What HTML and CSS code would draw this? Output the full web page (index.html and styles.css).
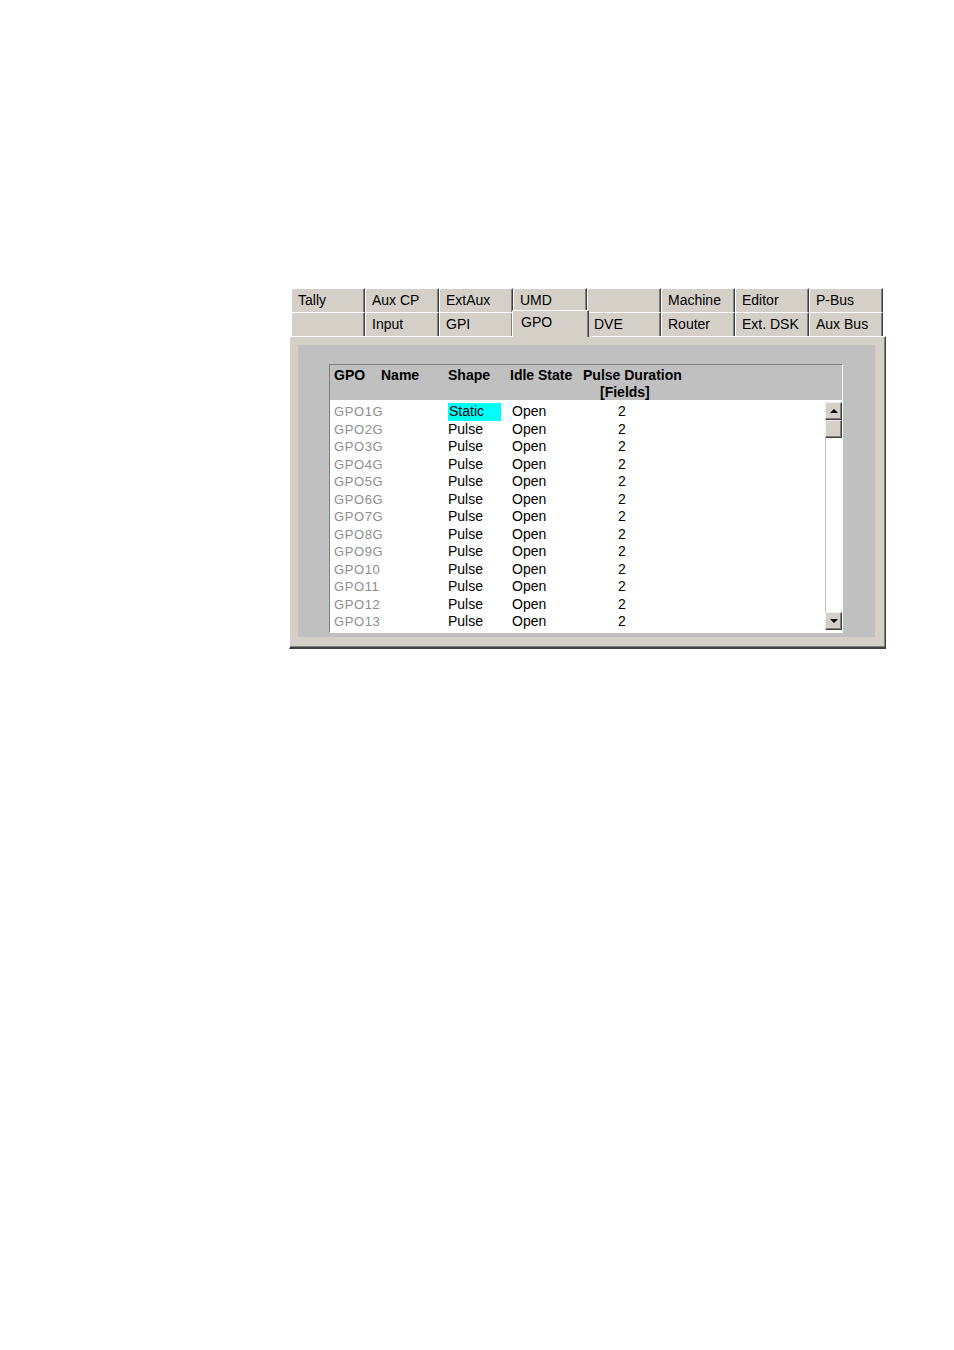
FILE: index.html
```html
<!DOCTYPE html>
<html lang="en">

<head>
    <meta charset="UTF-8">
    <title>GPO</title>
    <link rel="stylesheet" href="styles.css">
</head>

<body>
    <div class="window">
        <div class="tabs">
            <div class="tab">Tally</div>
            <div class="tab">Aux CP</div>
            <div class="tab">ExtAux</div>
            <div class="tab">UMD</div>
            <div class="tab"></div>
            <div class="tab">Machine</div>
            <div class="tab">Editor</div>
            <div class="tab">P-Bus</div>

            <div class="tab"></div>
            <div class="tab">Input</div>
            <div class="tab">GPI</div>
            <div class="tab sel">GPO</div>
            <div class="tab">DVE</div>
            <div class="tab">Router</div>
            <div class="tab">Ext. DSK</div>
            <div class="tab">Aux Bus</div>
        </div>
        <div class="body">
            <div class="inset">
                <div class="table">
                    <div class="thead">
                        <span>GPO</span>
                        <span>Name</span>
                        <span class="c-shape">Shape</span>
                        <span>Idle State</span>
                        <span>Pulse Duration<br><span class="fields">[Fields]</span></span>
                    </div>
                    <div class="tbody">
                        <ul class="rows">
                            <li class="row"><span class="id">GPO1G</span><span></span><span class="c-shape"><span class="hl">Static</span></span><span class="c-idle">Open</span><span class="c-dur">2</span></li>
                            <li class="row"><span class="id">GPO2G</span><span></span><span class="c-shape">Pulse</span><span class="c-idle">Open</span><span class="c-dur">2</span></li>
                            <li class="row"><span class="id">GPO3G</span><span></span><span class="c-shape">Pulse</span><span class="c-idle">Open</span><span class="c-dur">2</span></li>
                            <li class="row"><span class="id">GPO4G</span><span></span><span class="c-shape">Pulse</span><span class="c-idle">Open</span><span class="c-dur">2</span></li>
                            <li class="row"><span class="id">GPO5G</span><span></span><span class="c-shape">Pulse</span><span class="c-idle">Open</span><span class="c-dur">2</span></li>
                            <li class="row"><span class="id">GPO6G</span><span></span><span class="c-shape">Pulse</span><span class="c-idle">Open</span><span class="c-dur">2</span></li>
                            <li class="row"><span class="id">GPO7G</span><span></span><span class="c-shape">Pulse</span><span class="c-idle">Open</span><span class="c-dur">2</span></li>
                            <li class="row"><span class="id">GPO8G</span><span></span><span class="c-shape">Pulse</span><span class="c-idle">Open</span><span class="c-dur">2</span></li>
                            <li class="row"><span class="id">GPO9G</span><span></span><span class="c-shape">Pulse</span><span class="c-idle">Open</span><span class="c-dur">2</span></li>
                            <li class="row"><span class="id">GPO10</span><span></span><span class="c-shape">Pulse</span><span class="c-idle">Open</span><span class="c-dur">2</span></li>
                            <li class="row"><span class="id">GPO11</span><span></span><span class="c-shape">Pulse</span><span class="c-idle">Open</span><span class="c-dur">2</span></li>
                            <li class="row"><span class="id">GPO12</span><span></span><span class="c-shape">Pulse</span><span class="c-idle">Open</span><span class="c-dur">2</span></li>
                            <li class="row"><span class="id">GPO13</span><span></span><span class="c-shape">Pulse</span><span class="c-idle">Open</span><span class="c-dur">2</span></li>
                        </ul>
                        <div class="scroll">
                            <div class="sbtn"><span class="arr up"></span></div>
                            <div class="thumb"></div>
                            <div class="track"></div>
                            <div class="sbtn"><span class="arr down"></span></div>
                        </div>
                    </div>
                </div>
            </div>
        </div>
    </div>
</body>

</html>
```

FILE: styles.css
```css
* {
    margin: 0;
    padding: 0;
    list-style: none;
    box-sizing: border-box;
}

body {
    background: #fff;
    font-family: "Liberation Sans", Arial, sans-serif;
    font-size: 14px;
    color: #000;
}

.window {
    width: 597px;
    margin: 288px 0 0 289px;
}

/* tab strip, two rows */
.tabs {
    display: grid;
    grid-template-columns: repeat(8, 74px);
    grid-auto-rows: 24px;
    margin-left: 2px;
}

.tab {
    background: #d4d0c8;
    border-top: 1px solid #fff;
    border-left: 1px solid #fff;
    border-right: 1px solid #404040;
    box-shadow: inset -1px 0 #808080;
    border-top-left-radius: 2px;
    padding: 3px 0 0 6px;
    line-height: 17px;
    white-space: nowrap;
}

.tab.sel {
    position: relative;
    z-index: 1;
    margin: -2px -2px -1px -1px;
    padding: 3px 0 0 8px;
}

/* panel body */
.body {
    background: #d4d0c8;
    border-top: 1px solid #fff;
    border-left: 1px solid #fff;
    border-right: 1px solid #404040;
    border-bottom: 2px solid #404040;
    box-shadow: inset -1px -1px #808080;
    padding: 8px 10px 10px 8px;
}

.inset {
    background: #c0c0c0;
    padding: 19px 32px 4px 31px;
}

.table {
    border-top: 1px solid #808080;
    border-left: 1px solid #808080;
    border-right: 1px solid #fff;
    border-bottom: 1px solid #fff;
}

.thead,
.row {
    display: grid;
    grid-template-columns: 47px 66px 63px 73px 1fr;
    padding-left: 4px;
}

.thead {
    background: #c0c0c0;
    font-weight: bold;
    line-height: 17px;
    height: 36px;
    padding-top: 2px;
    border-bottom: 1px solid #fff;
}

.thead .c-shape {
    padding-left: 1px;
}

.fields {
    padding-left: 17px;
}

.tbody {
    display: flex;
    background: #fff;
    height: 231px;
    padding-top: 1px;
}

.rows {
    flex: 1;
    padding-top: 1px;
}

.row {
    height: 17.5px;
    line-height: 17.5px;
}

.row .id {
    color: #8e8e8e;
    font-size: 13px;
    letter-spacing: 0.6px;
}

.hl {
    display: inline-block;
    width: 53px;
    background: #00ffff;
    padding-left: 1px;
}

.row .c-shape {
    padding-left: 1px;
}

.row .c-idle {
    padding-left: 2px;
}

.row .c-dur {
    padding-left: 35px;
}

/* scrollbar */
.scroll {
    width: 17px;
    height: 228px;
    display: flex;
    flex-direction: column;
}

.sbtn,
.thumb {
    height: 18px;
    background: #d4d0c8;
    border-top: 1px solid #f0f0f0;
    border-left: 1px solid #f0f0f0;
    border-right: 1px solid #404040;
    border-bottom: 1px solid #404040;
    box-shadow: inset -1px -1px #808080;
    display: flex;
    align-items: center;
    justify-content: center;
}

.track {
    flex: 1;
    background: #fff;
    border-left: 1px solid #c0c0c0;
}

.arr {
    width: 0;
    height: 0;
    border-left: 4px solid transparent;
    border-right: 4px solid transparent;
}

.arr.up {
    border-bottom: 4px solid #000;
}

.arr.down {
    border-top: 4px solid #000;
}
```
